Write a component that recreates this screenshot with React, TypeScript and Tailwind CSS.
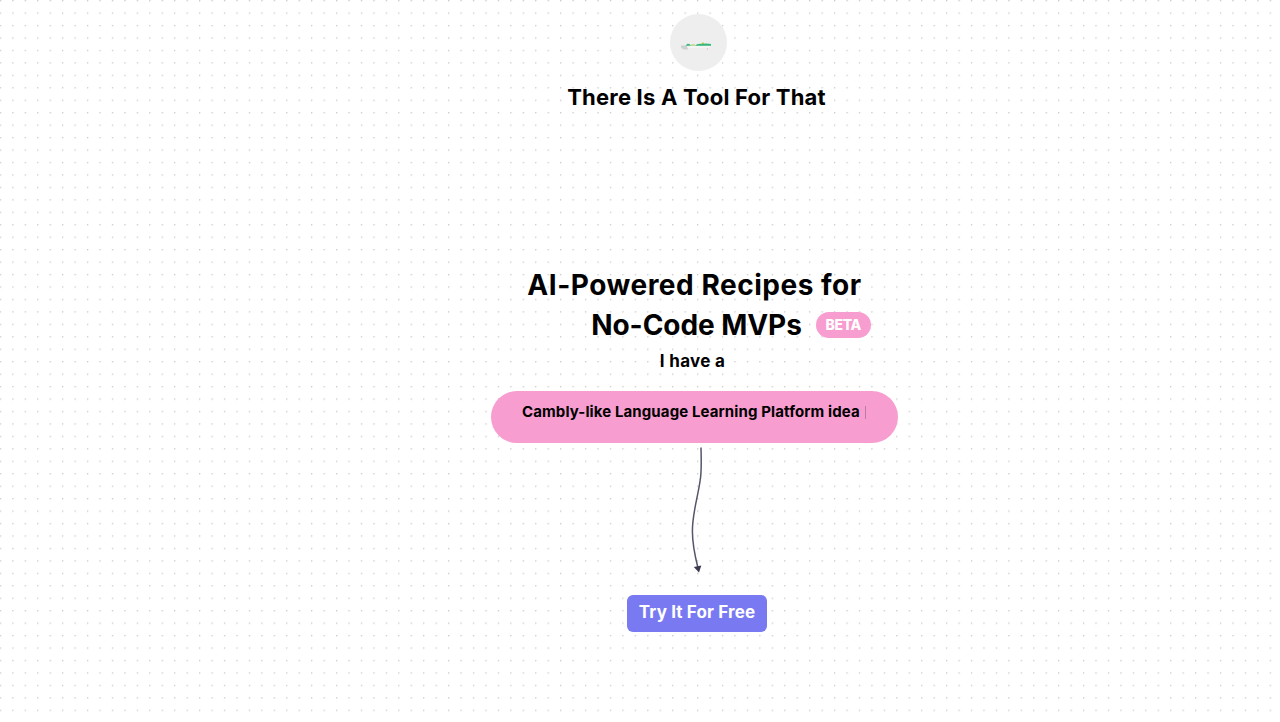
import { useId } from "react";

const GRID_GAP = 12.45;

function DotGrid() {
  const id = useId();

  return (
    <svg className="absolute inset-0 h-full w-full" aria-hidden="true">
      <pattern
        id={id}
        x={0.5}
        y={0.5}
        width={GRID_GAP}
        height={GRID_GAP}
        patternUnits="userSpaceOnUse"
        patternTransform="translate(-0.7,-0.5)"
      >
        <circle cx={0.7} cy={0.7} r={0.65} fill="#b8b8b8" />
      </pattern>
      <rect width="100%" height="100%" fill={`url(#${id})`} />
    </svg>
  );
}

function Logo() {
  return (
    <div className="flex size-[57px] items-center justify-center rounded-full bg-[#eeeeee]">
      <svg width="57" height="57" viewBox="0 0 57 57" aria-label="Logo">
        <path d="M11 31.5h6l1 4h-4.500l-2.500-2z" fill="#cbd0d0" />
        <path d="M17 32h23.500l-1.500 2H18z" fill="#f4f4f4" />
        <path d="M15.500 31.700l2-2 2 .3 1.500 1.700zM25 31.700l2-1.500 3-.5 2 .3 4-.5 5 .5v1.700z" fill="#35b67a" />
        <path d="M20.500 31.500l1-1h3l1 1zM31 29.700l2-1.500 2 2z" fill="#9acb3e" />
        <circle cx="37.500" cy="35" r="0.700" fill="#f3b6bb" />
      </svg>
    </div>
  );
}

function Arrow() {
  return (
    <svg className="mt-1 ml-2" width="30" height="131" viewBox="0 0 30 131" fill="none">
      <path
        d="M17 0.500C17.200 12 17.800 24 16.200 33C13.700 51 8.400 66 8.400 84C8.400 96 10.700 108 14 121"
        stroke="#55556c"
        strokeWidth="1.500"
      />
      <path d="M9.800 120l7.500-1.500-2.300 7z" fill="#39394f" />
    </svg>
  );
}

export default function App() {
  return (
    <main className="relative h-[722px] w-full overflow-hidden bg-white font-['Inter',sans-serif] font-bold text-black">
      <DotGrid />
      <div className="relative ml-[491px] flex w-[407px] flex-col items-center pt-3.5">
        <header className="flex flex-col items-center">
          <div className="ml-[9px]">
            <Logo />
          </div>
          <h1 className="mt-2.5 ml-1 whitespace-nowrap text-[22px] leading-8 tracking-[0.2px]">
            There Is A Tool For That
          </h1>
        </header>

        <section className="mt-[152px] flex w-full flex-col items-center">
          <h2 className="whitespace-nowrap text-[28px] leading-10 tracking-[0.52px]">
            AI-Powered Recipes for
          </h2>
          <div className="ml-[73px] flex items-center gap-3.5">
            <h2 className="whitespace-nowrap text-[28px] leading-10 tracking-[-0.06px]">No-Code MVPs</h2>
            <span className="flex h-[26px] w-[55px] items-center justify-center rounded-full bg-[#f79dcf] text-sm font-extrabold tracking-[-0.3px] text-white">
              BETA
            </span>
          </div>
          <p className="mr-1 text-[17px] leading-8 tracking-[0.3px]">I have a</p>
        </section>

        <div className="mt-3.5 flex h-[52px] w-full rounded-[26px] bg-[#f79dcf] pt-[9px] pl-[31px]">
          <p className="w-[338px] whitespace-nowrap text-[15px] leading-6 tracking-[0.11px]">
            Cambly-like Language Learning Platform idea
          </p>
          <span className="mt-1.5 ml-[5px] h-[13px] w-px bg-[#bd7ba4]" />
        </div>

        <Arrow />

        <button className="mt-[17px] ml-[5px] h-[37px] w-[140px] rounded-md bg-[#797af1] pb-[3px] whitespace-nowrap text-[17px] leading-7 tracking-[0.13px] text-white">
          Try It For Free
        </button>
      </div>
    </main>
  );
}
